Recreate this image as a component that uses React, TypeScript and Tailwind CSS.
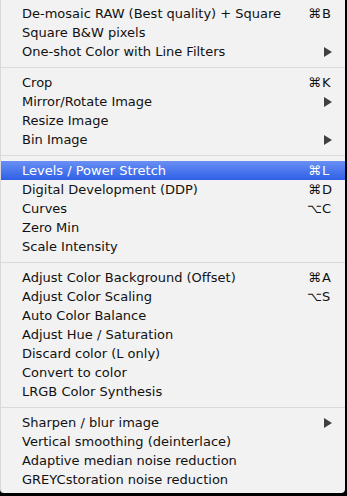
import React from 'react';

type Item =
  | { sep: true }
  | { label: string; mod?: string; key?: string; sub?: boolean; active?: boolean; sep?: false };

const items: Item[] = [
  { label: 'De-mosaic RAW (Best quality) + Square', mod: '⌘', key: 'B' },
  { label: 'Square B&W pixels' },
  { label: 'One-shot Color with Line Filters', sub: true },
  { sep: true },
  { label: 'Crop', mod: '⌘', key: 'K' },
  { label: 'Mirror/Rotate Image', sub: true },
  { label: 'Resize Image' },
  { label: 'Bin Image', sub: true },
  { sep: true },
  { label: 'Levels / Power Stretch', mod: '⌘', key: 'L', active: true },
  { label: 'Digital Development (DDP)', mod: '⌘', key: 'D' },
  { label: 'Curves', mod: '⌥', key: 'C' },
  { label: 'Zero Min' },
  { label: 'Scale Intensity' },
  { sep: true },
  { label: 'Adjust Color Background (Offset)', mod: '⌘', key: 'A' },
  { label: 'Adjust Color Scaling', mod: '⌥', key: 'S' },
  { label: 'Auto Color Balance' },
  { label: 'Adjust Hue / Saturation' },
  { label: 'Discard color (L only)' },
  { label: 'Convert to color' },
  { label: 'LRGB Color Synthesis' },
  { sep: true },
  { label: 'Sharpen / blur image', sub: true },
  { label: 'Vertical smoothing (deinterlace)' },
  { label: 'Adaptive median noise reduction' },
  { label: 'GREYCstoration noise reduction' },
];

function Arrow() {
  return (
    <svg width="8" height="10" viewBox="0 0 8 10" className="block">
      <path d="M0 0 L8 5 L0 10 Z" fill="#404040" />
    </svg>
  );
}

export default function App() {
  return (
    <div className="w-[347px] h-[496px] bg-black">
      <div
        className="w-[345px] h-[493px] bg-[#f2f2f2] rounded-b-[4px] pt-[4px] pb-[4px] text-[13px] text-[#111] border-l border-[#d8d8d8]"
        style={{ fontFamily: '"DejaVu Sans", "Open Sans", sans-serif' }}
      >
        {items.map((item, i) =>
          item.sep ? (
            <div key={i} className="h-[12px] flex items-center">
              <div className="w-full h-px bg-[#dadada]" />
            </div>
          ) : (
            <div
              key={i}
              className={
                item.active
                  ? 'h-[19px] flex items-center pt-[1px] pl-[21px] pr-[12px] text-white bg-gradient-to-b from-[#6a8ff4] to-[#2e5fe6]'
                  : 'h-[19px] flex items-center pt-[1px] pl-[21px] pr-[12px]'
              }
            >
              <span className="flex-1 whitespace-nowrap leading-[18px]">{item.label}</span>
              {item.mod && (
                <span className="flex items-center leading-[18px]">
                  <span className="w-[14px] text-right text-[13px]">{item.mod}</span>
                  <span className="w-[12px] pl-[1px]">{item.key}</span>
                </span>
              )}
              {item.sub && (
                <span className="w-[26px] flex justify-end pr-[1px]">
                  <Arrow />
                </span>
              )}
            </div>
          )
        )}
      </div>
    </div>
  );
}
